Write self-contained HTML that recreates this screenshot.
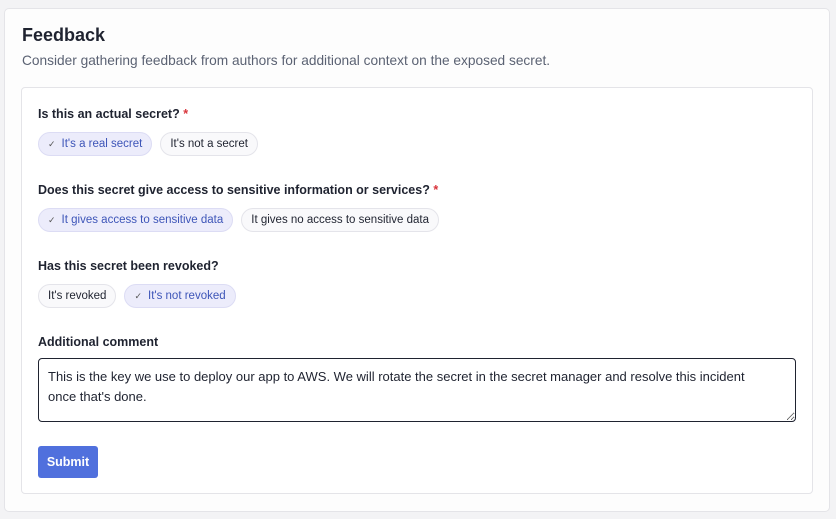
<!DOCTYPE html>
<html><head><style>
body{margin:0;width:836px;height:519px;background:#f3f3f5;font-family:"Liberation Sans",sans-serif;position:relative;overflow:hidden}
.outer{position:absolute;left:4px;top:8px;width:824px;height:502px;background:#fdfdfd;border:1px solid #e4e4e8;border-radius:5px}
h1{position:absolute;left:17px;top:16px;margin:0;font-size:18px;font-weight:bold;color:#1f2330}
.sub{position:absolute;left:17px;top:44px;font-size:13.7px;color:#5b6273}
.inner{position:absolute;left:16px;top:78px;width:790px;height:405px;background:#fff;border:1px solid #e4e4e8;border-radius:4px}
.lbl{position:absolute;left:16px;font-size:12.5px;font-weight:bold;color:#1f2330}
.lbl b{color:#d8333a}
.row{position:absolute;left:16px;display:flex;gap:8px}
.chip{height:22px;line-height:22px;padding:0 9px;border:1px solid #e4e4ea;border-radius:12px;background:#f9f9fb;font-size:11.5px;color:#1f2330;white-space:nowrap}
.chip.on{background:#ececfb;border-color:#dcdcf4;color:#3d55b8}
.chip.on:before{content:"✓";font-size:9px;margin-right:6px;color:#555}
textarea{position:absolute;left:16px;top:270px;width:758px;height:64px;box-sizing:border-box;border:1.3px solid #1f2330;border-radius:4px;padding:8px 30px 8px 9px;font-family:"Liberation Sans",sans-serif;font-size:13px;line-height:20px;color:#1f2330;resize:both;overflow:hidden;margin:0}
.btn{position:absolute;left:16px;top:358px;width:60px;height:32px;background:#5070dd;border-radius:3px;color:#fff;font-size:12.5px;font-weight:bold;text-align:center;line-height:32px}
</style></head><body>
<div class="outer">
<h1>Feedback</h1>
<div class="sub">Consider gathering feedback from authors for additional context on the exposed secret.</div>
<div class="inner">
<div class="lbl" style="top:19px">Is this an actual secret? <b>*</b></div>
<div class="row" style="top:44px"><div class="chip on">It's a real secret</div><div class="chip">It's not a secret</div></div>
<div class="lbl" style="top:95px">Does this secret give access to sensitive information or services? <b>*</b></div>
<div class="row" style="top:120px"><div class="chip on">It gives access to sensitive data</div><div class="chip">It gives no access to sensitive data</div></div>
<div class="lbl" style="top:171px">Has this secret been revoked?</div>
<div class="row" style="top:196px"><div class="chip">It's revoked</div><div class="chip on">It's not revoked</div></div>
<div class="lbl" style="top:247px">Additional comment</div>
<textarea>This is the key we use to deploy our app to AWS. We will rotate the secret in the secret manager and resolve this incident once that's done.</textarea>
<div class="btn">Submit</div>
</div>
</div>
</body></html>
